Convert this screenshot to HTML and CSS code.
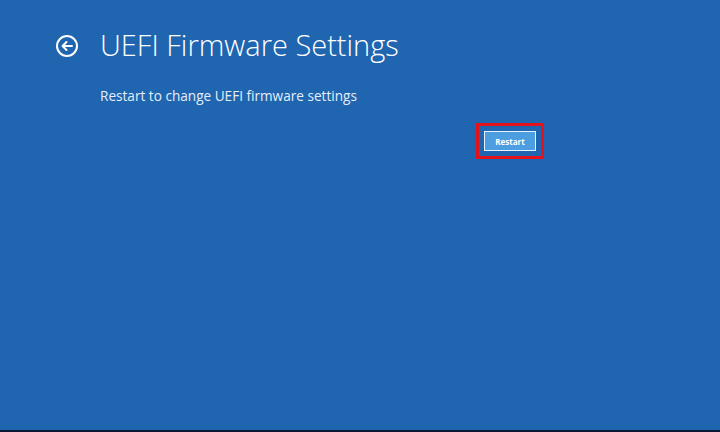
FILE: index.html
```html
<!DOCTYPE html>
<html lang="en">
<head>
<meta charset="utf-8">
<title>UEFI Firmware Settings</title>
<link rel="stylesheet" href="styles.css">
</head>
<body>
<div class="screen">
  <header class="header">
    <svg class="back" width="24" height="24" viewBox="0 0 24 24" aria-hidden="true">
      <circle cx="12" cy="12" r="10" fill="none" stroke="#fff" stroke-width="2"/>
      <path d="M17 12H7.5M11.5 8L7.5 12L11.5 16" fill="none" stroke="#fff" stroke-width="2" stroke-linecap="round" stroke-linejoin="round"/>
    </svg>
    <h1 class="title">UEFI Firmware Settings</h1>
  </header>
  <p class="subtitle">Restart to change UEFI firmware settings</p>
  <div class="actions">
    <div class="highlight">
      <button class="btn">Restart</button>
    </div>
  </div>
</div>
</body>
</html>
```
FILE: styles.css
```css
html, body {
  margin: 0;
  padding: 0;
  width: 720px;
  height: 432px;
  overflow: hidden;
}
body {
  background: #081a33;
  font-family: "Open Sans", "Liberation Sans", sans-serif;
  color: #fff;
}
.screen {
  width: 720px;
  height: 430px;
  background: #1f65b0;
  box-sizing: border-box;
  padding-top: 30px;
}
.header {
  display: flex;
  align-items: center;
  padding-left: 55px;
  height: 30px;
}
.back {
  display: block;
  margin-top: 1px;
}
.title {
  margin: 0 0 0 21px;
  font-weight: 300;
  font-size: 29px;
  line-height: 30px;
  letter-spacing: 0;
}
.subtitle {
  margin: 28px 0 0 100px;
  font-size: 13.6px;
  font-weight: 400;
  line-height: 16px;
  color: #e6eef8;
}
.actions {
  display: flex;
  padding-left: 476px;
  margin-top: 19px;
}
.highlight {
  border: 3px solid #e3121c;
  padding: 5px 5px;
}
.btn {
  display: block;
  width: 52px;
  height: 20px;
  background: #4c9ee0;
  border: 1px solid #e8f2fc;
  color: #fff;
  font-family: "Open Sans", "Liberation Sans", sans-serif;
  font-weight: 700;
  font-size: 8px;
  padding: 0;
}
```
